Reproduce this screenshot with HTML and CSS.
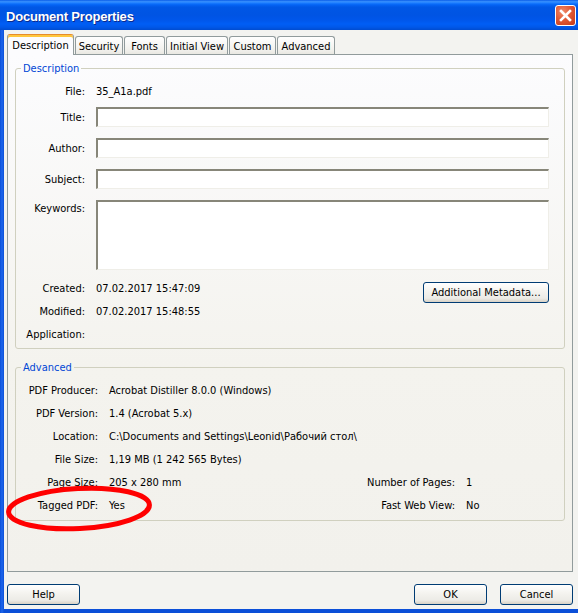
FILE: index.html
```html
<!DOCTYPE html>
<html lang="en">
<head>
<meta charset="utf-8">
<title>Document Properties</title>
<link rel="stylesheet" href="styles.css">
</head>
<body>
<div class="window">
  <div class="titlebar">
    <span class="title">Document Properties</span>
    <span class="close">
      <svg width="19" height="19" viewBox="0 0 19 19"><path d="M5 5 L14 14 M14 5 L5 14" stroke="#fff" stroke-width="2.6" stroke-linecap="square" fill="none"/></svg>
    </span>
  </div>
  <div class="client">
    <div class="tabs">
      <div class="tab active w-desc">Description</div>
      <div class="tab w-sec">Security</div>
      <div class="tab w-fonts">Fonts</div>
      <div class="tab w-init">Initial View</div>
      <div class="tab w-custom">Custom</div>
      <div class="tab w-adv">Advanced</div>
    </div>
    <div class="panel">
      <fieldset class="group">
        <legend>Description</legend>
        <div class="desc-form">
          <div class="row row-text"><span class="lbl">File:</span><span class="val">35_A1a.pdf</span></div>
          <div class="row row-first-field"><span class="lbl">Title:</span><input class="field" type="text"></div>
          <div class="row row-field"><span class="lbl">Author:</span><input class="field" type="text"></div>
          <div class="row row-field"><span class="lbl">Subject:</span><input class="field" type="text"></div>
          <div class="row row-field row-area"><span class="lbl lbl-top">Keywords:</span><textarea class="field area"></textarea></div>
          <div class="row row-text row-created"><span class="lbl">Created:</span><span class="val val-flex"><span>07.02.2017 15:47:09</span><button class="btn btn-meta">Additional Metadata...</button></span></div>
          <div class="row row-text row-next"><span class="lbl">Modified:</span><span class="val">07.02.2017 15:48:55</span></div>
          <div class="row row-text row-next"><span class="lbl">Application:</span><span class="val"></span></div>
        </div>
      </fieldset>
      <fieldset class="group group-adv">
        <legend>Advanced</legend>
        <div class="adv-grid">
          <span class="lbl">PDF Producer:</span><span class="val span3">Acrobat Distiller 8.0.0 (Windows)</span>
          <span class="lbl">PDF Version:</span><span class="val span3">1.4 (Acrobat 5.x)</span>
          <span class="lbl">Location:</span><span class="val span3">C:\Documents and Settings\Leonid\Рабочий стол\</span>
          <span class="lbl">File Size:</span><span class="val span3">1,19 MB (1 242 565 Bytes)</span>
          <span class="lbl">Page Size:</span><span class="val">205 x 280 mm</span><span class="lbl">Number of Pages:</span><span class="val">1</span>
          <span class="lbl">Tagged PDF:</span><span class="val">Yes</span><span class="lbl">Fast Web View:</span><span class="val">No</span>
        </div>
      </fieldset>
    </div>
    <div class="buttons">
      <button class="btn">Help</button>
      <button class="btn btn-ok">OK</button>
      <button class="btn">Cancel</button>
    </div>
  </div>
  <svg class="annot" width="578" height="613" viewBox="0 0 578 613">
    <ellipse cx="79" cy="508.5" rx="70.5" ry="20" transform="rotate(-3 79 508.5)" fill="none" stroke="#ff0000" stroke-width="5"/>
  </svg>
</div>
</body>
</html>
```

FILE: styles.css
```css
* { box-sizing: border-box; }
html, body { margin: 0; padding: 0; }
body {
  width: 578px;
  height: 613px;
  overflow: hidden;
  font-family: "DejaVu Sans Condensed", "DejaVu Sans", sans-serif;
  font-size: 11px;
  color: #000;
  background: #f3f3f0;
}
.window {
  position: relative;
  width: 578px;
  height: 613px;
  display: flex;
  flex-direction: column;
  background: linear-gradient(to right, #0a4fd9 0, #1d66ec 2px, #0b4fd8 4px);
  background-color: #0b52df;
}
.titlebar {
  height: 30px;
  flex: none;
  display: flex;
  align-items: center;
  padding: 2px 2px 0 6px;
  background: linear-gradient(to bottom, #0a5de8 0%, #3a93ff 6%, #1a7cff 10%, #0464f5 16%, #0057e5 24%, #0054e3 50%, #0056ea 66%, #005ef5 80%, #0058ea 90%, #004cd0 100%);
}
.title {
  flex: 1;
  color: #fff;
  font-family: "Liberation Sans", sans-serif;
  font-weight: bold;
  font-size: 13px;
  letter-spacing: -0.2px;
  text-shadow: 1px 1px 0 #0c2a8c;
}
.close {
  width: 21px;
  height: 21px;
  border: 1px solid #fff;
  border-radius: 3px;
  background: radial-gradient(circle at 35% 30%, #ef8a6a 0, #e15a36 45%, #cc4220 85%, #b8391a 100%);
  display: flex;
  align-items: center;
  justify-content: center;
  margin-bottom: 2px;
}
.close svg { display: block; }

.client {
  flex: 1;
  display: flex;
  flex-direction: column;
  margin: 0 0 4px 4px;
  padding: 4px 5px 0 3px;
  background: #f3f3f0;
}
.tabs {
  flex: none;
  height: 20px;
  display: flex;
  align-items: flex-end;
  gap: 1px;
  position: relative;
  z-index: 1;
}
.tab {
  height: 18px;
  border: 1px solid #919b9c;
  border-bottom: none;
  border-radius: 3px 3px 0 0;
  background: linear-gradient(#ffffff, #f3f2ee 70%, #e9e8e2);
  display: flex;
  align-items: center;
  justify-content: center;
  white-space: nowrap;
  padding-top: 1px;
}
.tab.active {
  height: 21px;
  margin-bottom: -1px;
  background: #fcfcfe;
  border-top: 1px solid #e68b2c;
  box-shadow: inset 0 2px 0 #ffc73c;
  padding-top: 1px;
  padding-bottom: 1px;
}
.w-desc { width: 67px; }
.w-sec { width: 48px; }
.w-fonts { width: 41px; }
.w-init { width: 62px; }
.w-custom { width: 47px; }
.w-adv { width: 58px; }

.panel {
  flex: 1;
  display: flex;
  flex-direction: column;
  border: 1px solid #919b9c;
  background: linear-gradient(#fcfcfe, #f4f3ee 60%, #f2f1ec);
}
.group {
  margin: 7px 7px 0 7px;
  padding: 0;
  border: 1px solid #d0d0bf;
  border-radius: 3px;
  min-width: 0;
}
.group legend {
  margin-left: 5px;
  padding: 0 2px;
  line-height: 13px;
  color: #0046d5;
}
.group-adv { margin-top: 12px; }

.desc-form {
  padding: 8px 15px 6px 0;
  display: flex;
  flex-direction: column;
}
.row {
  display: grid;
  grid-template-columns: 69px 1fr;
  column-gap: 11px;
  align-items: center;
}
.lbl { text-align: right; white-space: nowrap; }
.val { white-space: nowrap; }
.row-text { height: 16px; line-height: 16px; padding-top: 1px; }
.row-first-field { margin-top: 8px; }
.row-field { margin-top: 11px; }
.row-field .lbl { padding-top: 1px; }
.row-area { align-items: start; }
.lbl-top { line-height: 16px; }
.row-created { margin-top: 10px; }
.row-next { margin-top: 7px; }
.val-flex {
  display: flex;
  align-items: flex-start;
  height: 16px;
}
.field {
  display: block;
  width: 100%;
  height: 20px;
  margin: 0;
  padding: 0 3px;
  background: #fff;
  border-style: solid;
  border-width: 2px 1px 1px 2px;
  border-color: #878679 #efeee8 #efeee8 #878679;
  font: inherit;
  outline: none;
}
.area { height: 70px; resize: none; }

.adv-grid {
  display: grid;
  grid-template-columns: 82px 1fr auto 98px;
  grid-auto-rows: 23px;
  column-gap: 11px;
  align-items: center;
  padding: 5px 0 3px 0;
}
.span3 { grid-column: span 3; }

.btn {
  height: 21px;
  width: 73px;
  margin: 0;
  padding: 0;
  border: 1px solid #003c74;
  border-radius: 3px;
  background: linear-gradient(#ffffff 0%, #f5f4f0 40%, #ecebe6 80%, #d8d2c6 100%);
  font: inherit;
  color: #000;
}
.btn-meta {
  width: 126px;
  margin: 1px 0 -7px auto;
}
.buttons {
  flex: none;
  height: 37px;
  padding-top: 12px;
  display: flex;
  gap: 13px;
}
.btn-ok { margin-left: auto; }

.annot {
  position: absolute;
  left: 0;
  top: 0;
  pointer-events: none;
}
```
